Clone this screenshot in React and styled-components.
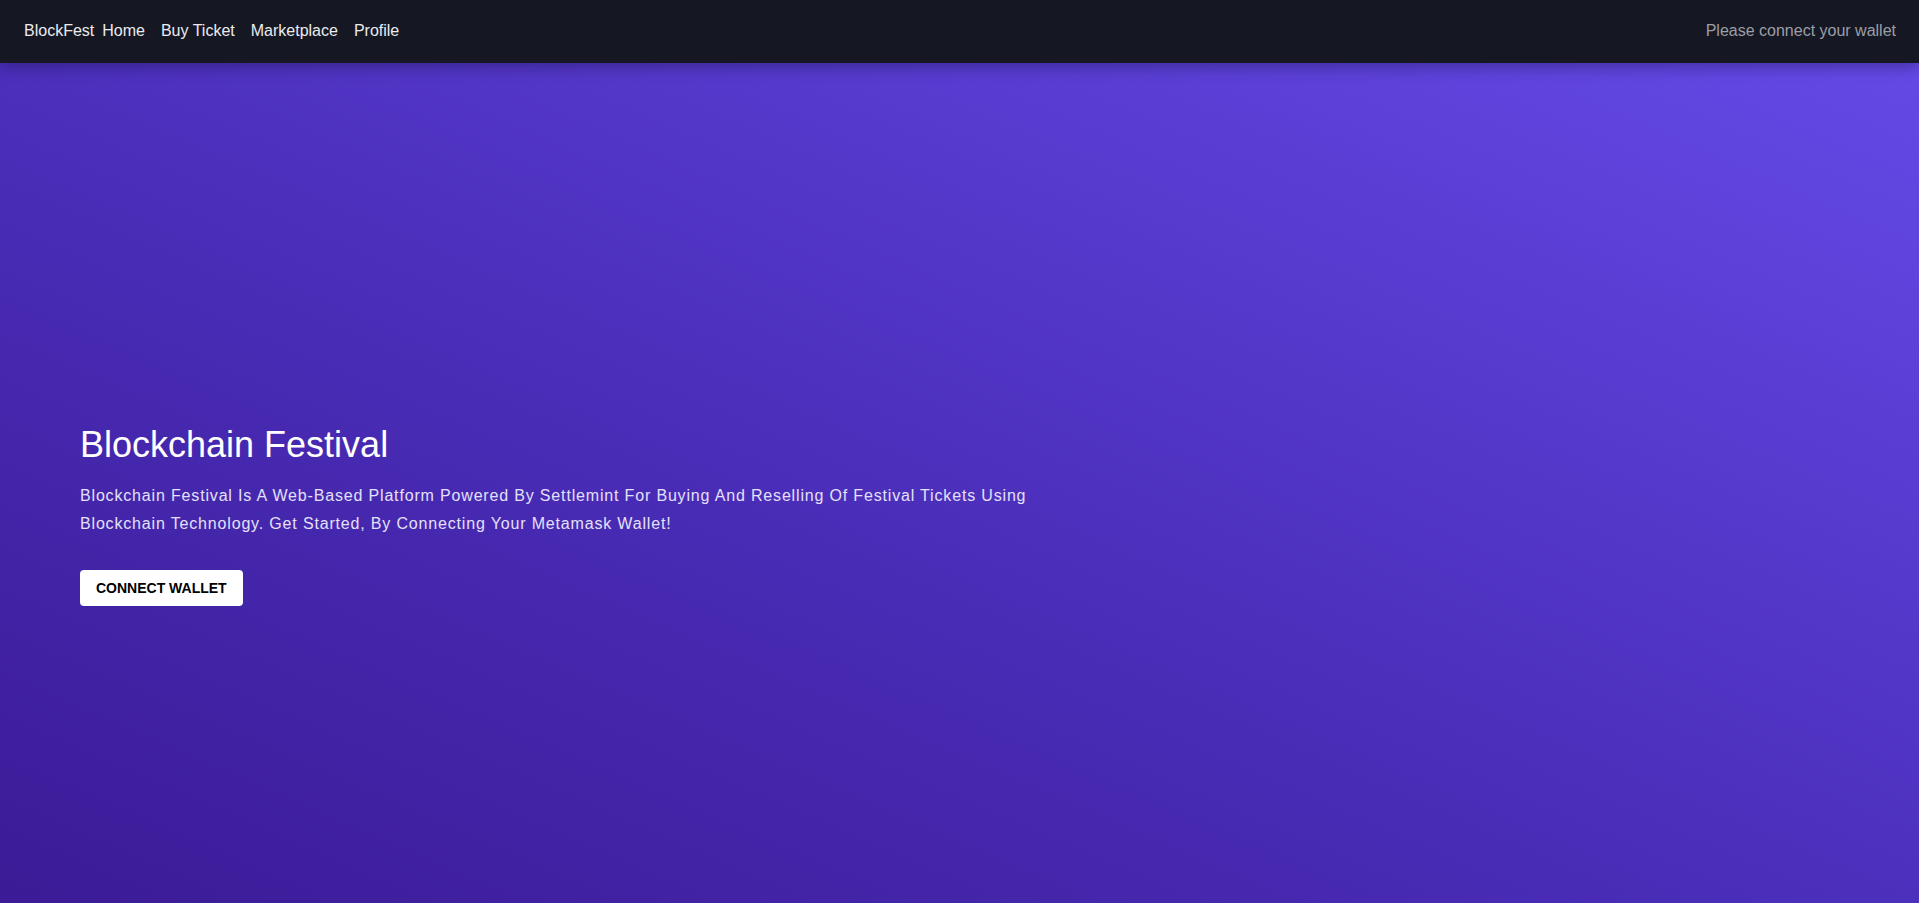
import React from 'react';
import styled, { createGlobalStyle } from 'styled-components';

const GlobalStyle = createGlobalStyle`
  html, body {
    margin: 0;
    padding: 0;
    background: #151823;
  }
  * {
    box-sizing: border-box;
  }
  body {
    font-family: "Liberation Sans", Arial, Helvetica, sans-serif;
  }
`;

const Page = styled.div`
  display: flex;
  flex-direction: column;
  min-height: 903px;
`;

const Nav = styled.nav`
  position: relative;
  z-index: 2;
  height: 63px;
  display: flex;
  align-items: center;
  justify-content: space-between;
  padding: 0 23px 2px 24px;
  background: #151823;
  box-shadow: 0 4px 14px rgba(10, 8, 40, 0.35);
`;

const NavLeft = styled.div`
  display: flex;
  align-items: center;
`;

const Brand = styled.span`
  color: #ebebf0;
  font-size: 16px;
  margin-right: 8px;
`;

const NavLink = styled.a`
  color: #ebebf0;
  font-size: 16px;
  text-decoration: none;
  margin-right: 16px;
  cursor: pointer;
`;

const WalletStatus = styled.span`
  color: #9d9ea6;
  font-size: 16px;
`;

const Hero = styled.main`
  flex: 1;
  display: flex;
  align-items: center;
  padding: 64px 80px 0;
  background: linear-gradient(to top right, #3b1b96 0%, #4a2db8 45%, #6549e6 100%);
`;

const Content = styled.div`
  display: flex;
  flex-direction: column;
  align-items: flex-start;
  max-width: 980px;
`;

const Title = styled.h1`
  margin: 0 0 17px;
  font-size: 36px;
  line-height: 40px;
  font-weight: 400;
  color: #ffffff;
`;

const Lead = styled.p`
  margin: 0 0 32px;
  font-size: 16px;
  line-height: 28px;
  letter-spacing: 0.052em;
  color: #e4e0f9;
`;

const ConnectButton = styled.button`
  height: 36px;
  padding: 0 16px;
  border: none;
  border-radius: 4px;
  background: #ffffff;
  color: #000000;
  font-family: inherit;
  font-size: 14px;
  font-weight: 700;
  text-transform: uppercase;
  cursor: pointer;
`;

const links = ['Home', 'Buy Ticket', 'Marketplace', 'Profile'];

export default function App() {
  return (
    <Page>
      <GlobalStyle />
      <Nav>
        <NavLeft>
          <Brand>BlockFest</Brand>
          {links.map((l) => (
            <NavLink key={l}>{l}</NavLink>
          ))}
        </NavLeft>
        <WalletStatus>Please connect your wallet</WalletStatus>
      </Nav>
      <Hero>
        <Content>
          <Title>Blockchain Festival</Title>
          <Lead>
            Blockchain Festival Is A Web-Based Platform Powered By Settlemint For Buying And Reselling Of Festival
            Tickets Using Blockchain Technology. Get Started, By Connecting Your Metamask Wallet!
          </Lead>
          <ConnectButton>Connect Wallet</ConnectButton>
        </Content>
      </Hero>
    </Page>
  );
}
